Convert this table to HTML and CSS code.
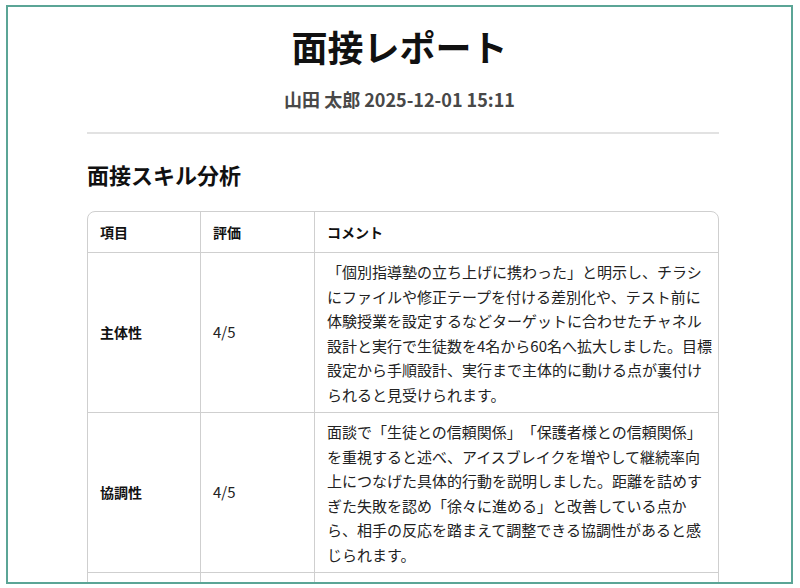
FILE: index.html
```html
<!DOCTYPE html>
<html lang="ja">
<head>
<meta charset="utf-8">
<title>面接レポート</title>
<link rel="stylesheet" href="styles.css">
</head>
<body>
<div class="frame">
  <header class="report-header">
    <h1 class="title">面接レポート</h1>
    <p class="meta">山田 太郎 2025-12-01 15:11</p>
  </header>
  <main class="content">
    <hr class="divider">
    <h2 class="section-title">面接スキル分析</h2>
    <table class="skills">
      <thead>
        <tr>
          <th class="col-item">項目</th>
          <th class="col-score">評価</th>
          <th class="col-comment">コメント</th>
        </tr>
      </thead>
      <tbody>
        <tr>
          <td class="item">主体性</td>
          <td class="score">4/5</td>
          <td class="comment">「個別指導塾の立ち上げに携わった」と明示し、チラシにファイルや修正テープを付ける差別化や、テスト前に体験授業を設定するなどターゲットに合わせたチャネル設計と実行で生徒数を4名から60名へ拡大しました。目標設定から手順設計、実行まで主体的に動ける点が裏付けられると見受けられます。</td>
        </tr>
        <tr>
          <td class="item">協調性</td>
          <td class="score">4/5</td>
          <td class="comment">面談で「生徒との信頼関係」「保護者様との信頼関係」を重視すると述べ、アイスブレイクを増やして継続率向上につなげた具体的行動を説明しました。距離を詰めすぎた失敗を認め「徐々に進める」と改善している点から、相手の反応を踏まえて調整できる協調性があると感じられます。</td>
        </tr>
        <tr class="next-row">
          <td class="item"></td>
          <td class="score"></td>
          <td class="comment"></td>
        </tr>
      </tbody>
    </table>
  </main>
</div>
</body>
</html>
```

FILE: styles.css
```css
* { box-sizing: border-box; }

html, body {
  margin: 0;
  padding: 0;
  background: #ffffff;
}

body {
  font-family: "Noto Sans CJK JP", "Noto Sans", sans-serif;
  color: #1a1a1a;
}

.frame {
  margin: 5px 7px 0 6px;
  height: 579px;
  border: 2px solid #5ba596;
  overflow: hidden;
  background: #ffffff;
}

.report-header {
  text-align: center;
  padding-top: 17px;
}

.title {
  margin: 0;
  font-size: 36px;
  line-height: 44px;
  font-weight: 700;
  color: #111;
}

.meta {
  margin: 19px 0 0;
  font-size: 18px;
  line-height: 24px;
  font-weight: 700;
  color: #484848;
}

.content {
  padding: 0 72px 0 79px;
}

.divider {
  margin: 21px 0 0;
  border: 0;
  height: 2px;
  background: #e2e2e2;
}

.section-title {
  margin: 25px 0 0;
  font-size: 22px;
  line-height: 30px;
  font-weight: 700;
  color: #111;
}

.skills {
  margin-top: 22px;
  width: 100%;
  border-collapse: separate;
  border-spacing: 0;
  border: 1px solid #cfcfcf;
  border-radius: 8px;
  font-size: 15px;
}

.skills th,
.skills td {
  border-right: 1px solid #cfcfcf;
  border-bottom: 1px solid #cfcfcf;
  padding: 11px 12px;
  text-align: left;
}

.skills th:last-child,
.skills td:last-child {
  border-right: 0;
}

.skills th {
  font-size: 14px;
  line-height: 18px;
  font-weight: 700;
  color: #111;
}

.col-item { width: 113px; }
.col-score { width: 114px; }

.skills td {
  vertical-align: middle;
  line-height: 24.5px;
  color: #222;
}

.skills td.item {
  font-weight: 700;
  font-size: 14px;
  color: #111;
}

.skills td.score {
  font-size: 15px;
}

.skills td.comment {
  padding: 7px 6px 5px 12px;
  text-spacing-trim: space-all;
}

.skills .next-row td {
  height: 60px;
}
```
